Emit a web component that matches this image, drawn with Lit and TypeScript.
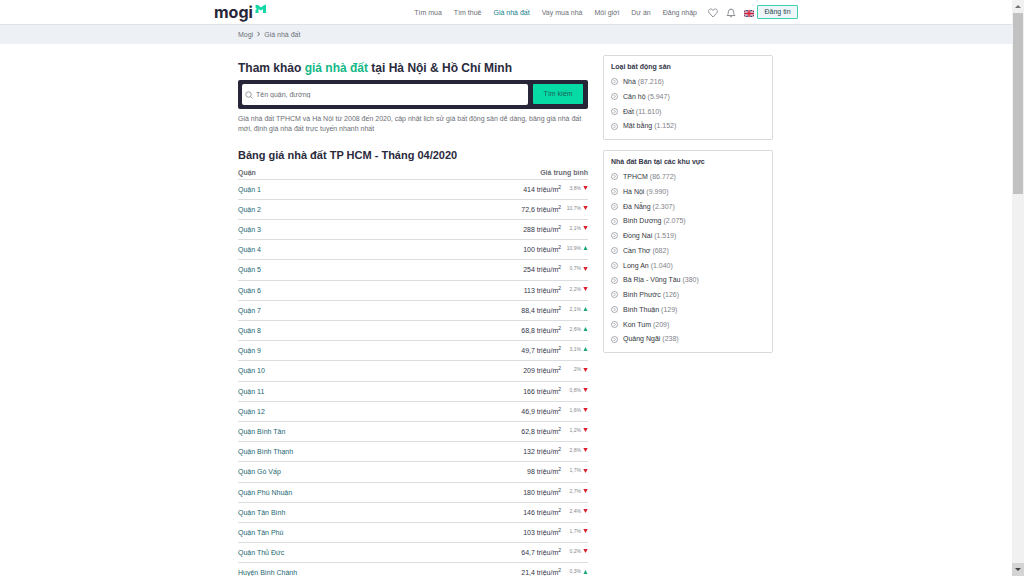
import { LitElement, html, css } from "lit";
import { customElement } from "lit/decorators.js";

const NAV = ["Tìm mua", "Tìm thuê", "Giá nhà đất", "Vay mua nhà", "Môi giới", "Dự án", "Đăng nhập"];

const PRICES: [string, string, string, boolean][] = [
  ["Quận 1", "414", "3,8%", false],
  ["Quận 2", "72,6", "10,7%", false],
  ["Quận 3", "288", "2,1%", false],
  ["Quận 4", "100", "10,9%", true],
  ["Quận 5", "254", "0,7%", false],
  ["Quận 6", "113", "2,2%", false],
  ["Quận 7", "88,4", "2,1%", true],
  ["Quận 8", "68,8", "2,6%", true],
  ["Quận 9", "49,7", "3,1%", true],
  ["Quận 10", "209", "2%", false],
  ["Quận 11", "166", "0,8%", false],
  ["Quận 12", "46,9", "1,6%", false],
  ["Quận Bình Tân", "62,8", "1,2%", false],
  ["Quận Bình Thạnh", "132", "2,8%", false],
  ["Quận Gò Vấp", "98", "1,7%", false],
  ["Quận Phú Nhuận", "180", "2,7%", false],
  ["Quận Tân Bình", "146", "2,4%", false],
  ["Quận Tân Phú", "103", "1,7%", false],
  ["Quận Thủ Đức", "64,7", "0,2%", false],
  ["Huyện Bình Chánh", "21,4", "0,3%", true],
];

const TYPES: [string, string][] = [
  ["Nhà", "87.216"],
  ["Căn hộ", "5.947"],
  ["Đất", "11.610"],
  ["Mặt bằng", "1.152"],
];

const AREAS: [string, string][] = [
  ["TPHCM", "86.772"],
  ["Hà Nội", "9.990"],
  ["Đà Nẵng", "2.307"],
  ["Bình Dương", "2.075"],
  ["Đồng Nai", "1.519"],
  ["Cần Thơ", "682"],
  ["Long An", "1.040"],
  ["Bà Rịa - Vũng Tàu", "380"],
  ["Bình Phước", "126"],
  ["Bình Thuận", "129"],
  ["Kon Tum", "209"],
  ["Quảng Ngãi", "238"],
];

@customElement("link-card")
class LinkCard extends LitElement {
  static properties = { heading: {}, items: { attribute: false } };
  declare heading: string;
  declare items: [string, string][];

  static styles = css`
    :host {
      display: block;
      border: 1px solid #d9dadc;
      border-radius: 2px;
      padding: 4px 7px 6px;
    }
    h2 {
      margin: 0;
      font-size: 7px;
      line-height: 14px;
      color: #35374a;
    }
    ul {
      margin: 0;
      padding: 0;
      list-style: none;
    }
    li {
      display: flex;
      align-items: center;
      gap: 5px;
      height: 15px;
    }
    li:nth-child(4n) {
      height: 14px;
    }
    svg {
      width: 7px;
      height: 7px;
      fill: none;
      stroke: #74777f;
      stroke-width: 1.2;
    }
    a {
      color: #33363e;
      text-decoration: none;
    }
    .count {
      color: #808289;
    }
  `;

  render() {
    return html`
      <h2>${this.heading}</h2>
      <ul>
        ${this.items.map(
          ([name, count]) => html`<li>
            <svg viewBox="0 0 14 14" aria-hidden="true"><circle cx="7" cy="7" r="6" /><path d="M5.500 4l3 3-3 3" /></svg>
            <a href="#">${name} <span class="count">(${count})</span></a>
          </li>`
        )}
      </ul>
    `;
  }
}

@customElement("app-root")
class AppRoot extends LitElement {
  static styles = css`
    :host {
      display: flex;
      height: 100vh;
      overflow: hidden;
      background: #fff;
      color: #6b6e76;
      font: 7px/10px "Liberation Sans", Arial, sans-serif;
    }
    a {
      color: inherit;
      text-decoration: none;
    }
    .page {
      flex: 1;
      min-width: 0;
      height: 100%;
      overflow: hidden;
    }
    .header {
      border-bottom: 1px solid #dfe3e8;
    }
    .bar {
      box-sizing: border-box;
      display: flex;
      align-items: center;
      width: 584px;
      max-width: 100%;
      height: 24px;
      margin: 0 auto;
    }
    .logo {
      display: flex;
      align-items: flex-start;
      gap: 2px;
      margin-right: auto;
      color: #262638;
      font: 700 16px/20px Inter, sans-serif;
    }
    .logo svg {
      width: 12px;
      height: 10px;
      margin-top: 2px;
      fill: #12d8a5;
    }
    nav {
      display: flex;
      gap: 12px;
      margin-right: 11px;
      padding-top: 2px;
    }
    .active {
      color: #14808c;
    }
    .tools {
      display: flex;
      align-items: center;
      gap: 8px;
      margin-right: 3px;
      padding-top: 2px;
    }
    .tools a {
      display: flex;
    }
    .tools svg {
      width: 10px;
      height: 10px;
      fill: none;
      stroke: #777b83;
    }
    .tools .flag {
      height: 7px;
    }
    .post {
      width: 41px;
      height: 14px;
      padding: 0;
      border: 1px solid #3fd0b0;
      border-radius: 1px;
      background: #edf6f8;
      color: #2e4a52;
      font: inherit;
    }
    .crumbs {
      padding-right: 1px;
      background: #edf1f6;
    }
    .crumbs ol {
      display: flex;
      gap: 4px;
      width: 535px;
      max-width: 100%;
      margin: 0 auto;
      padding: 5px 0 4px;
      list-style: none;
    }
    .crumbs svg {
      width: 3px;
      height: 6px;
      margin-right: 4px;
      fill: none;
      stroke: #6b6e76;
    }
    main {
      display: grid;
      grid-template-columns: minmax(0, 350px) 170px;
      justify-content: center;
      align-items: start;
      gap: 15px;
      padding: 11px 1px 0 0;
    }
    h1 {
      margin: 0 0 4px;
      padding-top: 5px;
      color: #2a2a3c;
      font-size: 12px;
      line-height: 16px;
    }
    h1 span {
      color: #12b886;
    }
    .search {
      display: flex;
      gap: 5px;
      padding: 4px;
      border-radius: 2px;
      background: #262638;
    }
    .field {
      display: flex;
      align-items: center;
      gap: 3px;
      flex: 1;
      min-width: 0;
      height: 21px;
      padding: 0 3px;
      border-radius: 2px;
      background: #fff;
    }
    .field svg {
      width: 8px;
      height: 8px;
      fill: none;
      stroke: #74777f;
      stroke-width: 1.4;
    }
    .field input {
      flex: 1;
      min-width: 0;
      height: 14px;
      padding: 0;
      border: 0;
      outline: 0;
      background: none;
      font: inherit;
    }
    .field input::placeholder {
      color: #6b6e76;
      opacity: 1;
      line-height: 14px;
    }
    .submit {
      width: 50px;
      height: 20px;
      margin-right: 1px;
      padding: 0;
      border: 0;
      border-radius: 1px;
      background: #06dba6;
      color: #1d5f58;
      font: inherit;
    }
    .intro {
      margin: 5px 0 0;
    }
    h2 {
      margin: 14px 0 4px;
      color: #2a2a3c;
      font-size: 11px;
      line-height: 14px;
    }
    table {
      width: 100%;
      border-collapse: separate;
      border-spacing: 0;
    }
    th {
      height: 13px;
      padding: 0;
      border-bottom: 1px solid #dcdddf;
      font-weight: 700;
      color: #6a6c74;
      text-align: left;
    }
    th.price {
      text-align: right;
    }
    td {
      box-sizing: border-box;
      height: 20px;
      padding: 0;
      border-bottom: 1px solid #dcdddf;
      color: #1c6672;
    }
    tr:nth-child(5n) td {
      height: 21px;
    }
    td.price {
      color: #35374a;
    }
    .value {
      display: flex;
      justify-content: flex-end;
    }
    sup {
      font-size: 5px;
      line-height: 1px;
    }
    .change {
      display: flex;
      align-items: center;
      justify-content: flex-end;
      gap: 2px;
      width: 27px;
      height: 7px;
      color: #85888f;
      font-size: 5px;
      line-height: 7px;
    }
    .change svg {
      width: 5px;
      height: 4px;
      fill: #d9202c;
    }
    .change .up {
      fill: #17a673;
    }
    aside {
      display: grid;
      gap: 10px;
    }
    .scroll {
      display: flex;
      flex-direction: column;
      width: 12px;
      height: 100%;
      background: #f1f1f1;
    }
    .scroll svg {
      width: 12px;
      height: 13px;
      fill: #707070;
    }
    .thumb {
      height: 181px;
      margin: 0 1px;
      background: #c1c1c1;
    }
    .scroll .down {
      margin-top: auto;
      background: #d4d4d4;
      fill: #404040;
    }
  `;

  arrow(up: boolean) {
    return up
      ? html`<svg class="up" viewBox="0 0 5 4" role="img" aria-label="tăng"><path d="M.5 4L2.500 0l2 4z" /></svg>`
      : html`<svg viewBox="0 0 5 4" role="img" aria-label="giảm"><path d="M.3 0h4.400L2.500 4z" /></svg>`;
  }

  render() {
    return html`
      <div class="page">
        <header class="header">
          <div class="bar">
            <a class="logo" href="#">mogi<svg viewBox="0 0 24 20" aria-hidden="true"><path d="M1 2h5l6 5 5-4 5-2v17h-6v-8l-4 3-5-3v8H1v-6l3-2-3-3z" /></svg></a>
            <nav>${NAV.map((n) => html`<a href="#" class=${n === "Giá nhà đất" ? "active" : ""}>${n}</a>`)}</nav>
            <div class="tools">
              <a href="#" aria-label="Yêu thích"><svg viewBox="0 0 20 20"><path stroke-width="1.600" d="M10 18L2.500 10C-.5 6 2 2 5.500 2 8 2 9.500 3.500 10 5c.5-1.500 2-3 4.500-3C18 2 20.500 6 17.500 10z" /></svg></a>
              <a href="#" aria-label="Thông báo"><svg viewBox="0 0 20 20"><path stroke-width="1.600" d="M2 15c2.500-2 2.500-4 2.500-7a5.500 5.500 0 0 1 11 0c0 3 0 5 2.500 7zM8 15.500c0 3.300 4 3.300 4 0M10 2.500V1" /></svg></a>
              <a href="#" aria-label="English"><svg class="flag" viewBox="0 0 20 14"><path stroke="none" fill="#303b75" d="M0 0h20v14H0z" /><path stroke="#fff" stroke-width="2.500" d="M0 0l20 14M20 0L0 14" /><path stroke="#fff" stroke-width="5" d="M10 0v14M0 7h20" /><path stroke="#d5203c" stroke-width="1" d="M0 0l20 14M20 0L0 14" /><path stroke="#d5203c" stroke-width="3" d="M10 0v14M0 7h20" /></svg></a>
            </div>
            <button class="post">Đăng tin</button>
          </div>
        </header>
        <div class="crumbs">
          <ol>
            <li><a href="#">Mogi</a></li>
            <li><svg viewBox="0 0 3 6" aria-hidden="true"><path d="M.5 .8L2.500 3 .5 5.200" /></svg><a href="#">Giá nhà đất</a></li>
          </ol>
        </div>
        <main>
          <section>
            <h1>Tham khảo <span>giá nhà đất</span> tại Hà Nội &amp; Hồ Chí Minh</h1>
            <form class="search" @submit=${(e: Event) => e.preventDefault()}>
              <label class="field">
                <svg viewBox="0 0 16 16" aria-hidden="true"><circle cx="7" cy="7" r="5.500" /><path d="M11 11l4 4" /></svg>
                <input type="text" placeholder="Tên quận, đường" aria-label="Tên quận, đường" />
              </label>
              <button class="submit">Tìm kiếm</button>
            </form>
            <p class="intro">Giá nhà đất TPHCM và Hà Nội từ 2008 đến 2020, cập nhật lịch sử giá bất động sản dễ dàng, bảng giá nhà đất mới, định giá nhà đất trực tuyến nhanh nhất</p>
            <h2>Bảng giá nhà đất TP HCM - Tháng 04/2020</h2>
            <table>
              <thead>
                <tr><th>Quận</th><th class="price">Giá trung bình</th></tr>
              </thead>
              <tbody>
                ${PRICES.map(
                  ([name, price, change, up]) => html`<tr>
                    <td><a href="#">${name}</a></td>
                    <td class="price"><div class="value"><span>${price} triệu/m<sup>2</sup></span><span class="change">${change}${this.arrow(up)}</span></div></td>
                  </tr>`
                )}
              </tbody>
            </table>
          </section>
          <aside>
            <link-card heading="Loại bất động sản" .items=${TYPES}></link-card>
            <link-card heading="Nhà đất Bán tại các khu vực" .items=${AREAS}></link-card>
          </aside>
        </main>
      </div>
      <div class="scroll" aria-hidden="true">
        <svg viewBox="0 0 12 13"><path d="M3 8l3-3 3 3z" /></svg>
        <div class="thumb"></div>
        <svg class="down" viewBox="0 0 12 13"><path d="M3 5h6L6 8z" /></svg>
      </div>
    `;
  }
}
